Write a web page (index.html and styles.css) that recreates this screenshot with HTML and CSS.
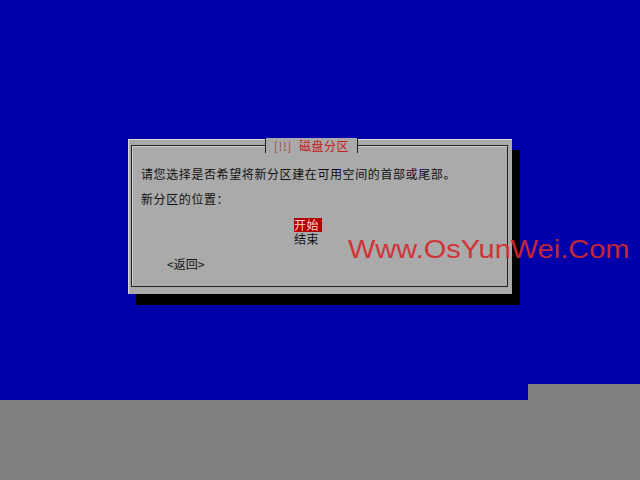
FILE: index.html
```html
<!DOCTYPE html>
<html lang="zh-CN">
<head>
  <meta charset="UTF-8" />
  <title>磁盘分区</title>
  <link rel="stylesheet" href="styles.css">
</head>
<body>

  <div class="screen">
    <div class="dialog">
      <div class="frame">
        <div class="title"><span class="level">[!!]</span> 磁盘分区</div>
        <p class="prompt">请您选择是否希望将新分区建在可用空间的首部或尾部。</p>
        <p class="label">新分区的位置：</p>
        <ul class="choices">
          <li class="selected">开始</li>
          <li>结束</li>
        </ul>
        <div class="back">&lt;返回&gt;</div>
      </div>
    </div>
    <div class="notch"></div>
  </div>
  <div class="desk"></div>

  <div class="watermark">Www.OsYunWei.Com</div>

</body>
</html>
```

FILE: styles.css
```css
body {
  margin: 0;
  width: 640px;
  height: 480px;
  overflow: hidden;
  background: #0000aa;
  font-family: "Noto Sans CJK SC", "DejaVu Sans", sans-serif;
  font-size: 12px;
  color: #111;
}

.screen {
  position: relative;
  height: 400px;
  box-sizing: border-box;
  padding: 139px 0 0 128px;
}

.dialog {
  width: 384px;
  height: 155px;
  box-sizing: border-box;
  background: #aaaaaa;
  border-top: 1px solid #d6d6d6;
  border-left: 1px solid #d6d6d6;
  box-shadow: 8px 11px 0 #000;
  padding: 5px 4px 7px 2px;
}

.frame {
  height: 100%;
  box-sizing: border-box;
  border: 1px solid #222;
  box-shadow: inset 1px 1px 0 #cfcfcf;
  padding-left: 9px;
}

.title {
  width: fit-content;
  margin: -8px 0 0 124px;
  padding: 0 8px;
  height: 15px;
  line-height: 15px;
  background: #aaaaaa;
  border-left: 1px solid #222;
  border-right: 1px solid #222;
  color: #c41e1e;
  letter-spacing: 0.5px;
}

.title .level {
  color: #a04a4a;
  margin-right: 4px;
}

.prompt,
.label {
  margin: 0;
  line-height: 16px;
  letter-spacing: 0.6px;
}

.prompt {
  margin-top: 13px;
}

.label {
  margin-top: 9px;
}

.choices {
  list-style: none;
  margin: 11px 0 0 153px;
  padding: 0;
}

.choices li {
  width: 28px;
  height: 14px;
  line-height: 14px;
  letter-spacing: 0.5px;
}

.choices .selected {
  background: #b40000;
  color: #ffd0d0;
}

.back {
  margin: 10px 0 0 26px;
  line-height: 16px;
}

.notch {
  position: absolute;
  right: 0;
  bottom: 0;
  width: 112px;
  height: 16px;
  background: #808080;
}

.desk {
  height: 80px;
  background: #808080;
}

.watermark {
  position: absolute;
  left: 348px;
  top: 235px;
  font-family: "Liberation Sans", Arial, sans-serif;
  font-size: 25px;
  line-height: 28px;
  color: #d42a2e;
  transform: scaleX(1.16);
  transform-origin: left top;
  opacity: 0.92;
}
```
